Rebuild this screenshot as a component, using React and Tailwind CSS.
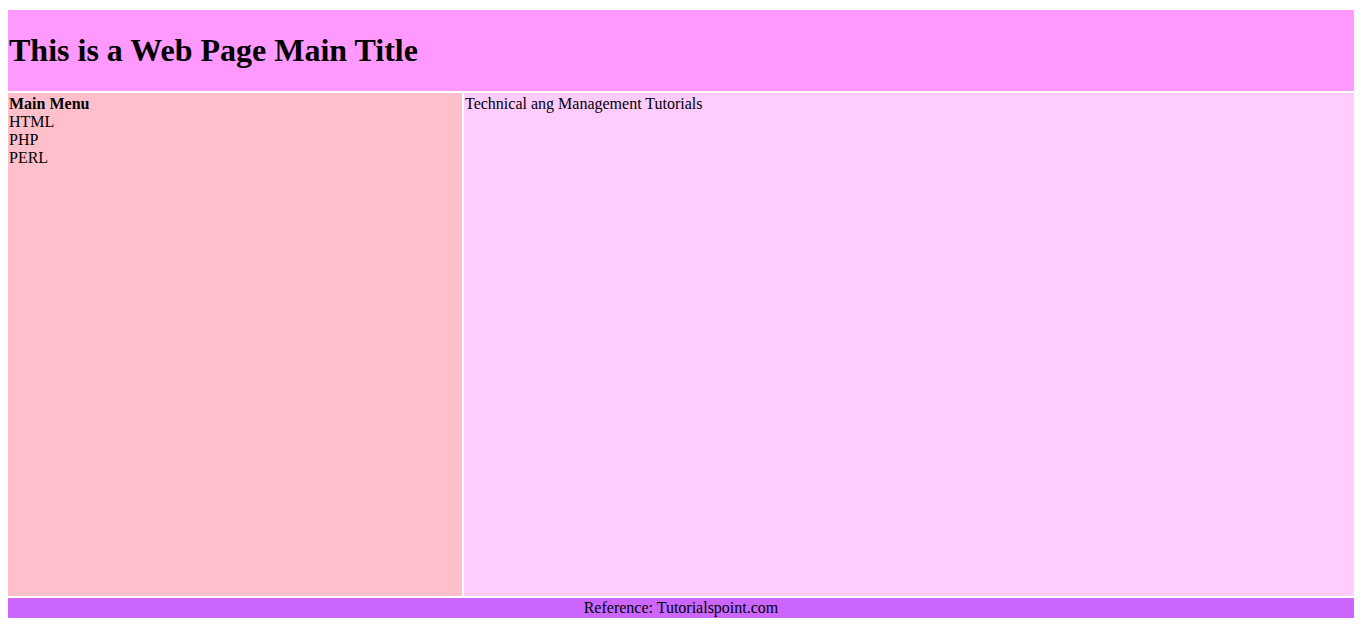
import React from "react";

const MENU = ["HTML", "PHP", "PERL"];

export default function App() {
  return (
    <div className="min-h-screen bg-white pt-[10px] pl-2 font-['Liberation_Serif',serif] text-[16px] leading-[normal] text-black">
      <div className="grid w-[1346px] grid-cols-[454px_1fr] gap-[2px]">
        {/* header */}
        <div className="col-span-2 flex h-[81px] items-center bg-[#ff99ff] px-px">
          <h1 className="text-[32px] font-bold">This is a Web Page Main Title</h1>
        </div>

        {/* menu */}
        <div className="flex h-[503px] flex-col bg-[#ffc0cb] px-px pt-[2px]">
          <b>Main Menu</b>
          {MENU.map((item) => (
            <span key={item}>{item}</span>
          ))}
        </div>

        {/* content */}
        <div className="bg-[#ffccff] px-px pt-[2px]">Technical ang Management Tutorials</div>

        {/* footer */}
        <div className="col-span-2 flex h-[20px] items-center justify-center bg-[#cc66ff] p-px">
          Reference: Tutorialspoint.com
        </div>
      </div>
    </div>
  );
}
